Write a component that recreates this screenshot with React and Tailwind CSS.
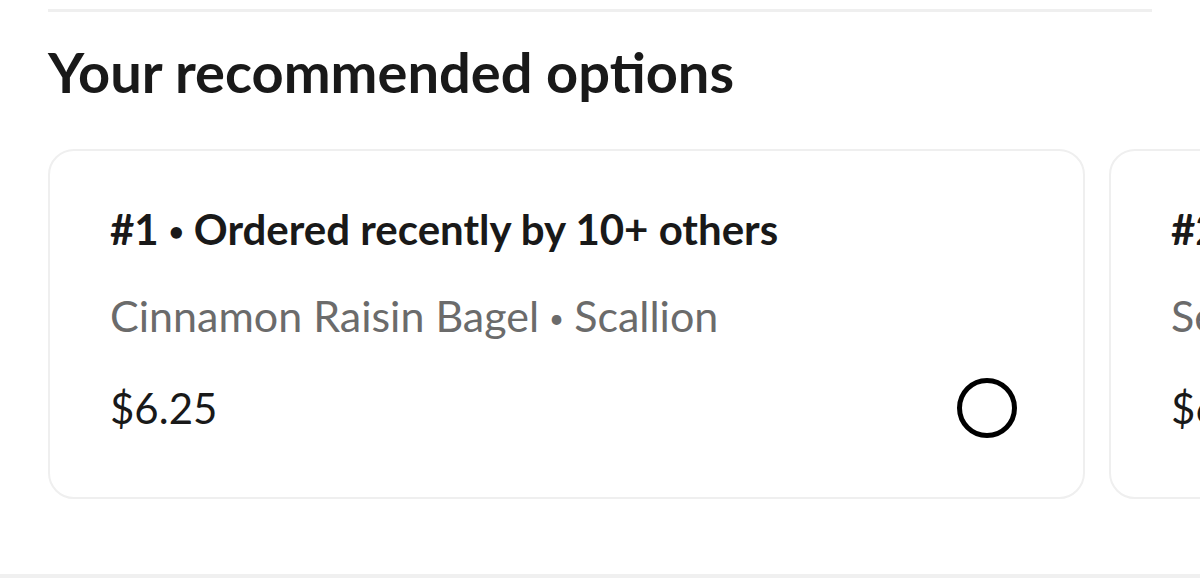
const options = [
  {
    id: 1,
    label: "#1",
    reason: "Ordered recently by 10+ others",
    items: ["Cinnamon Raisin Bagel", "Scallion"],
    price: "$6.25",
  },
  {
    id: 2,
    label: "#2",
    reason: "Ordered recently by 10+ others",
    items: ["Sesame Bagel", "Plain"],
    price: "$6.25",
  },
];

const Dot = () => <span className="text-[26px] align-middle mx-[10px] relative -top-[3px]">•</span>;

const OptionCard = ({ option }) => (
  <div className="shrink-0 w-[1037px] h-[350px] rounded-[26px] border-2 border-[#efefef] bg-white pl-[60px] pr-[66px] pt-[54px]">
    <p className="text-[42px] leading-[48px] font-bold text-[#191919] whitespace-nowrap">
      {option.label}
      <Dot />
      {option.reason}
    </p>
    <p className="mt-[34px] text-[43px] leading-[48px] text-[#6b6b6b] whitespace-nowrap">
      {option.items[0]}
      <Dot />
      {option.items[1]}
    </p>
    <div className="mt-[33px] flex items-center justify-between">
      <p className="text-[42px] leading-[48px] text-[#191919]">{option.price}</p>
      <span className="w-[60px] h-[60px] rounded-full border-[5px] border-black" />
    </div>
  </div>
);

export default function App() {
  return (
    <div
      className="w-[1200px] h-[578px] overflow-hidden bg-white flex flex-col"
      style={{ fontFamily: "Lato, 'Noto Sans', sans-serif" }}
    >
      <div className="px-[48px] pt-[9px]">
        <div className="h-[3px] bg-[#efefef]" />
      </div>
      <h2 className="px-[48px] mt-[28px] text-[56px] leading-[64px] font-bold text-[#191919] whitespace-nowrap">
        Your recommended options
      </h2>
      <div className="mt-[45px] flex gap-[24px] pl-[48px]">
        {options.map((o) => (
          <OptionCard key={o.id} option={o} />
        ))}
      </div>
      <div className="flex-1" />
      <div className="h-[4px] bg-[#f0f0f0]" />
    </div>
  );
}
